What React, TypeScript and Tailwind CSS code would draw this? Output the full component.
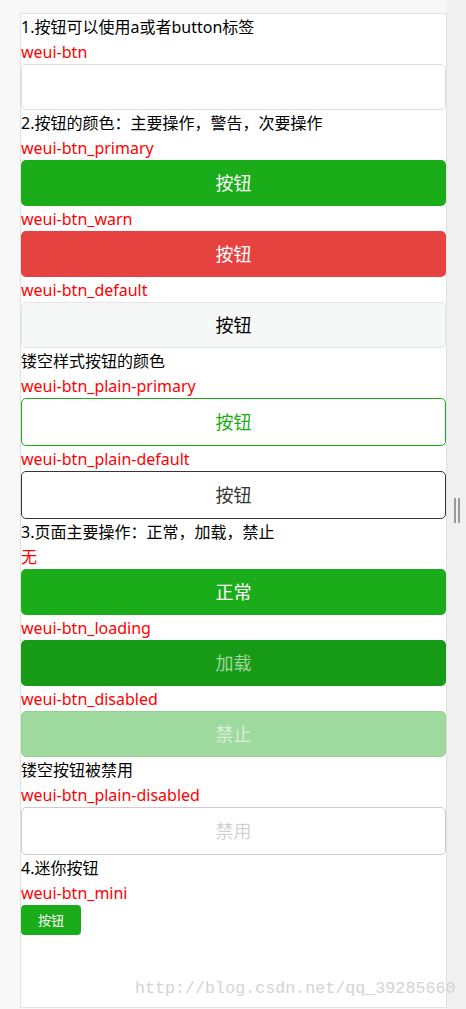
const font = "font-['Noto_Sans','Noto_Sans_CJK_SC',sans-serif]";

function Note({ children, red }: { children: React.ReactNode; red?: boolean }) {
  return <div className={`h-[25px] pt-px text-base leading-[24px] ${red ? 'text-[#ff0000]' : 'text-black'}`}>{children}</div>;
}

function Btn({ children, className }: { children: React.ReactNode; className: string }) {
  return (
    <div className={`w-full rounded-[5px] text-center text-[18px] ${className}`}>
      {children}
    </div>
  );
}

export default function App() {
  return (
    <div className={`relative flex min-h-[1009px] bg-[#f8f8f8] ${font}`}>
      <div className="w-[20px] shrink-0" />
      <div className="mt-[13px] h-[995px] w-[427px] shrink-0 border border-[#e2e2e2] bg-white">
        <Note>1.按钮可以使用a或者button标签</Note>
        <Note red>weui-btn</Note>
        <Btn className="h-[46px] border border-[#dedede] bg-white leading-[44px]">{''}</Btn>
        <Note>2.按钮的颜色：主要操作，警告，次要操作</Note>
        <Note red>weui-btn_primary</Note>
        <Btn className="h-[46px] bg-[#1aad19] leading-[46px] text-white">按钮</Btn>
        <Note red>weui-btn_warn</Note>
        <Btn className="h-[46px] bg-[#e64340] leading-[46px] text-white">按钮</Btn>
        <Note red>weui-btn_default</Note>
        <Btn className="h-[46px] border border-[#e6e6e6] bg-[#f6f7f7] leading-[44px] text-black">按钮</Btn>
        <Note>镂空样式按钮的颜色</Note>
        <Note red>weui-btn_plain-primary</Note>
        <Btn className="h-[48px] border border-[#1aad19] leading-[46px] text-[#1aad19]">按钮</Btn>
        <Note red>weui-btn_plain-default</Note>
        <Btn className="h-[48px] border border-[#353535] leading-[46px] text-[#353535]">按钮</Btn>
        <Note>3.页面主要操作：正常，加载，禁止</Note>
        <Note red>无</Note>
        <Btn className="h-[46px] bg-[#1aad19] leading-[46px] text-white">正常</Btn>
        <Note red>weui-btn_loading</Note>
        <Btn className="h-[46px] bg-[#179b16] leading-[46px] text-white/60">加载</Btn>
        <Note red>weui-btn_disabled</Note>
        <Btn className="h-[46px] border border-[#94d193] bg-[#9ed99d] leading-[44px] text-white/60">禁止</Btn>
        <Note>镂空按钮被禁用</Note>
        <Note red>weui-btn_plain-disabled</Note>
        <Btn className="h-[48px] border border-[#cccccc] leading-[46px] text-black/20">禁用</Btn>
        <Note>4.迷你按钮</Note>
        <Note red>weui-btn_mini</Note>
        <div className="h-[30px] w-[60px] rounded-[4px] bg-[#1aad19] text-center text-[13px] leading-[30px] text-white">按钮</div>
      </div>
      <div className="w-[19px] shrink-0 bg-[#f0f0f0]">
        <div className="ml-[7px] mt-[498px] flex gap-[2px]">
          <div className="h-[25px] w-[2px] bg-[#9a9a9a]" />
          <div className="h-[25px] w-[2px] bg-[#9a9a9a]" />
        </div>
      </div>
      <div className="pointer-events-none absolute left-[135px] top-[976px] font-['Liberation_Mono',monospace] text-[16.7px] text-[#d4d4d4]">
        http://blog.csdn.net/qq_39285660
      </div>
    </div>
  );
}
